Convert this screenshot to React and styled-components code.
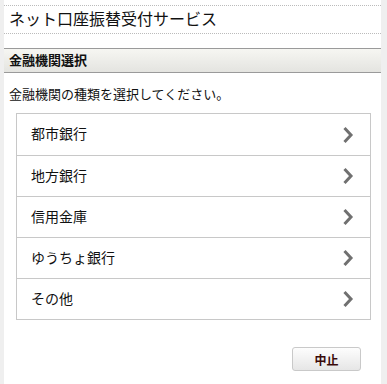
import React from "react"
import styled, { createGlobalStyle } from "styled-components"

const GlobalStyle = createGlobalStyle`
    html, body {
        margin: 0;
        padding: 0;
        background: #efefef;
    }
    body {
        font-family: "Noto Sans CJK JP", "Noto Sans", sans-serif;
        color: #222;
    }
`

const Page = styled.div`
    margin-left: 4px;
    width: 377px;
    min-height: 384px;
    background: #fff;
    padding-top: 5px;
    box-sizing: border-box;
`

const TitleBar = styled.h1`
    margin: 0;
    height: 27px;
    border-top: 1px dotted #bbb;
    border-bottom: 1px dotted #bbb;
    padding-left: 5px;
    font-size: 16px;
    font-weight: normal;
    line-height: 25px;
    color: #111;
`

const SectionHeader = styled.h2`
    margin: 14px 0 0;
    height: 23px;
    border-top: 1px solid #9a9a9a;
    border-bottom: 1px solid #9a9a9a;
    background: linear-gradient(#f6f6f2, #e4e4e0);
    padding-left: 5px;
    font-size: 13px;
    font-weight: bold;
    line-height: 22px;
    color: #111;
`

const Lead = styled.p`
    margin: 0;
    padding: 12px 0 0 5px;
    font-size: 13px;
    line-height: 18px;
    color: #111;
`

const BankList = styled.ul`
    list-style: none;
    margin: 10px 0 0 12px;
    padding: 0;
    width: 355px;
    border: 1px solid #c8c8c8;
    box-sizing: border-box;
`

const BankItem = styled.li`
    display: flex;
    align-items: center;
    justify-content: space-between;
    height: 41px;
    padding: 0 16px 3px 14px;
    box-sizing: border-box;
    font-size: 14px;
    color: #111;
    cursor: pointer;

    & + & {
        border-top: 1px solid #c8c8c8;
    }
`

const Footer = styled.div`
    display: flex;
    justify-content: flex-end;
    padding: 27px 20px 0 0;
`

const CancelButton = styled.button`
    width: 69px;
    height: 24px;
    border: 1px solid #c9c9c9;
    border-radius: 3px;
    background: linear-gradient(#fdfdfd, #e6e6e6);
    font-family: inherit;
    font-size: 12px;
    font-weight: bold;
    color: #3a0a0a;
    padding: 0;
    cursor: pointer;
`

const Chevron = () => (
    <svg width="12" height="18" viewBox="0 0 12 18" style={{ marginTop: 3 }}>
        <path d="M2.5 2 L9 9 L2.5 16" fill="none" stroke="#707070" strokeWidth="3" />
    </svg>
)

const banks = ["都市銀行", "地方銀行", "信用金庫", "ゆうちょ銀行", "その他"]

const App = () => {
    return (
        <>
            <GlobalStyle />
            <Page>
                <TitleBar>ネット口座振替受付サービス</TitleBar>
                <SectionHeader>金融機関選択</SectionHeader>
                <Lead>金融機関の種類を選択してください。</Lead>

                <BankList>
                    {banks.map((name) => (
                        <BankItem key={name}>
                            <span>{name}</span>
                            <Chevron />
                        </BankItem>
                    ))}
                </BankList>

                <Footer>
                    <CancelButton>中止</CancelButton>
                </Footer>
            </Page>
        </>
    )
}

export default App
